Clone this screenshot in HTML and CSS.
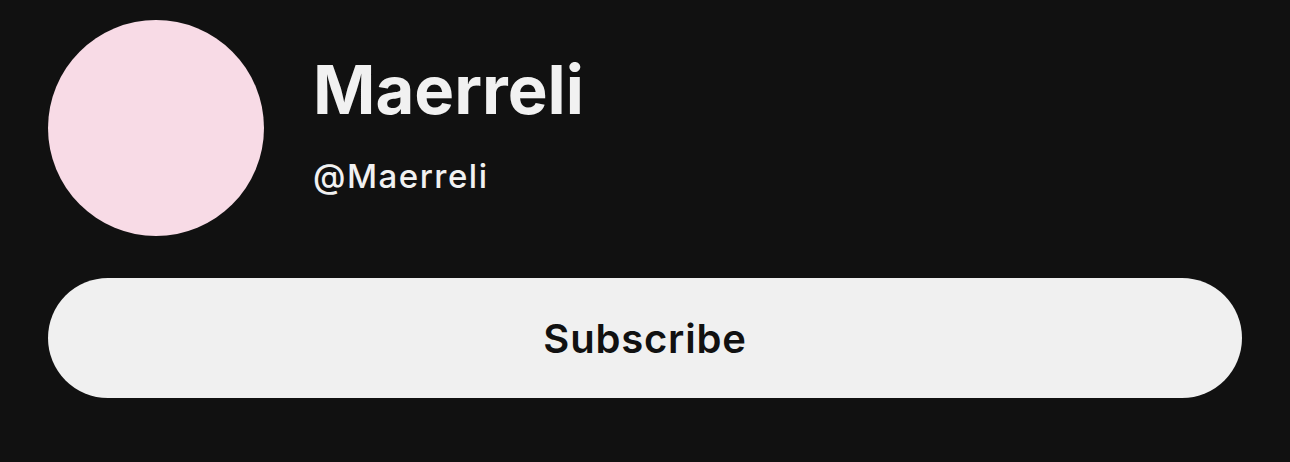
FILE: index.html
```html
<!DOCTYPE html>
<html lang="en">
<head>
    <meta charset="UTF-8">
    <meta name="viewport" content="width=device-width, initial-scale=1.0">
    <title>Maerreli</title>
    <link rel="stylesheet" href="styles.css">
</head>
<body>
    <div class="channel">
        <div class="channel-header">
            <div class="avatar"></div>
            <div class="channel-info">
                <h1 class="channel-name">Maerreli</h1>
                <p class="channel-handle">@Maerreli</p>
            </div>
        </div>
        <button class="subscribe-btn">Subscribe</button>
    </div>
</body>
</html>
```

FILE: styles.css
```css
body {
    font-family: 'Inter', 'Noto Sans', sans-serif;
    background: #111111;
    color: #f1f1f1;
    margin: 0;
}
.channel {
    padding: 20px 48px;
    display: flex;
    flex-direction: column;
}
.channel-header {
    display: flex;
    align-items: center;
    gap: 49px;
}
.avatar {
    width: 216px;
    height: 216px;
    border-radius: 50%;
    background: #f8dbe6;
    flex-shrink: 0;
}
.channel-info {
    display: flex;
    flex-direction: column;
    gap: 26px;
    margin-top: -10px;
}
.channel-name {
    margin: 0;
    font-size: 67px;
    font-weight: 700;
    line-height: 80px;
}
.channel-handle {
    margin: 0;
    font-size: 33px;
    font-weight: 500;
    line-height: 40px;
    letter-spacing: 1.5px;
}
.subscribe-btn {
    margin-top: 42px;
    height: 120px;
    border: none;
    border-radius: 60px;
    background: #f0f0f0;
    color: #111111;
    font-family: inherit;
    font-size: 40px;
    font-weight: 600;
    letter-spacing: 0.8px;
    cursor: pointer;
}
```
